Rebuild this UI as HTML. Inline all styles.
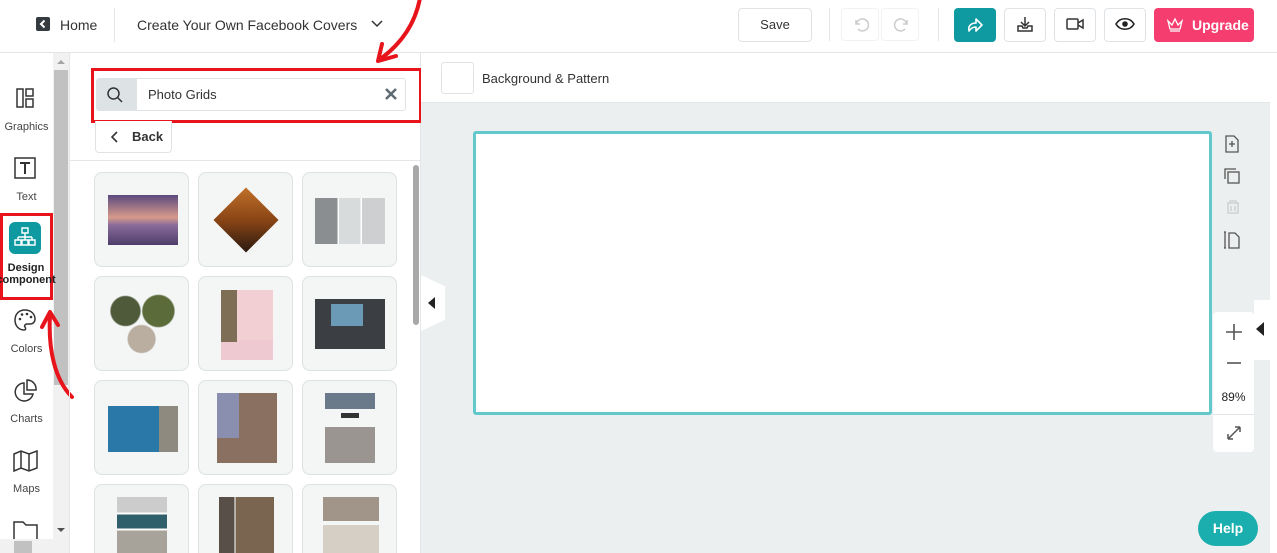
<!DOCTYPE html>
<html style="width:1277px;height:553px;overflow:hidden"><head><meta charset="utf-8"><style>
*{box-sizing:border-box;margin:0;padding:0}
body{width:1277px;height:553px;overflow:hidden;position:relative;background:#fff;font-family:"Liberation Sans",sans-serif;color:#333}
.a{position:absolute}
.btn{position:absolute;border:1px solid #dfe3e6;border-radius:4px;background:#fff}
.card{position:absolute;width:95px;height:95px;border:1px solid #dde1e3;border-radius:8px;background:#f4f6f6;overflow:hidden}
.side{position:absolute;left:0;width:53px;text-align:center;font-size:11px;color:#444}
</style></head><body>
<div class="a" style="left:0;top:52px;width:1277px;height:1px;background:#e3e6e8"></div>
<div class="a" style="left:36px;top:17px;width:14px;height:14px;background:#333b40;border-radius:2px"></div>
<svg class="a" style="left:36px;top:17px" width="14" height="14"><path d="M8.5 3.5 5 7l3.5 3.5" stroke="#fff" stroke-width="2" fill="none"/></svg>
<div class="a" style="left:60px;top:17px;font-size:14px;color:#333">Home</div>
<div class="a" style="left:114px;top:8px;width:1px;height:34px;background:#e3e6e8"></div>
<div class="a" style="left:137px;top:17px;font-size:14px;color:#333">Create Your Own Facebook Covers</div>
<svg class="a" style="left:371px;top:19px" width="12" height="10"><path d="M1 2l5 5 5-5" stroke="#333" stroke-width="1.5" fill="none"/></svg>
<div class="btn" style="left:738px;top:8px;width:74px;height:34px;font-size:13px;text-align:center;line-height:32px;color:#333">Save</div>
<div class="a" style="left:829px;top:8px;width:1px;height:33px;background:#e3e6e8"></div>
<div class="btn" style="left:841px;top:8px;width:38px;height:33px;border-color:#f0f2f3"></div>
<div class="btn" style="left:881px;top:8px;width:38px;height:33px;border-color:#f0f2f3"></div>
<svg class="a" style="left:852px;top:15px" width="18" height="18"><path d="M4 5v4h4M4.5 9A6 6 0 1 1 6 14" stroke="#ccc" stroke-width="1.5" fill="none"/></svg>
<svg class="a" style="left:893px;top:15px" width="18" height="18"><path d="M14 5v4h-4M13.5 9A6 6 0 1 0 12 14" stroke="#ccc" stroke-width="1.5" fill="none"/></svg>
<div class="a" style="left:938px;top:8px;width:1px;height:33px;background:#e3e6e8"></div>
<div class="a" style="left:954px;top:8px;width:42px;height:34px;background:#0e9aa0;border-radius:4px"></div>
<svg class="a" style="left:965px;top:15px" width="20" height="20"><path d="M4 16c-1-4 1-8 7-8V4l6 6-6 6v-4c-3 0-5 1-7 4z" stroke="#fff" stroke-width="1.6" fill="none" stroke-linejoin="round"/></svg>
<div class="btn" style="left:1004px;top:8px;width:42px;height:34px"></div>
<svg class="a" style="left:1016px;top:15px" width="18" height="18"><path d="M9 2v8M5 7l4 4 4-4M2 11v5h14v-5h-4l-1 2H7l-1-2z" stroke="#333" stroke-width="1.5" fill="none"/></svg>
<div class="btn" style="left:1054px;top:8px;width:42px;height:34px"></div>
<svg class="a" style="left:1066px;top:16px" width="20" height="16"><rect x="1" y="3" width="11" height="10" rx="1" stroke="#333" stroke-width="1.5" fill="none"/><path d="M12 7l5-3v8l-5-3" stroke="#333" stroke-width="1.5" fill="none"/></svg>
<div class="btn" style="left:1104px;top:8px;width:42px;height:34px"></div>
<svg class="a" style="left:1115px;top:17px" width="20" height="14"><path d="M1 7c4-7 14-7 18 0-4 7-14 7-18 0z" stroke="#222" stroke-width="1.6" fill="none"/><circle cx="10" cy="7" r="2.8" fill="#222"/></svg>
<div class="a" style="left:1154px;top:8px;width:100px;height:34px;background:#f53d6f;border-radius:4px;color:#fff;font-weight:bold;font-size:14px;line-height:34px;padding-left:38px">Upgrade</div>
<svg class="a" style="left:1166px;top:17px" width="18" height="15"><path d="M2 4l4 4 3-6 3 6 4-4-2 8H4zM4 14h10" stroke="#fff" stroke-width="1.3" fill="none"/></svg>
<svg class="a" style="left:360px;top:0" width="70" height="70"><path d="M60 -2C55 25 40 45 19 60" stroke="#e8141c" stroke-width="4" fill="none" stroke-linecap="round"/><path d="M22 44 18 61 36 56" stroke="#e8141c" stroke-width="4" fill="none" stroke-linecap="round" stroke-linejoin="round"/></svg>
<div class="a" style="left:53px;top:53px;width:16px;height:500px;background:#f1f1f1"></div>
<div class="a" style="left:54px;top:70px;width:14px;height:315px;background:#c1c1c1"></div>
<svg class="a" style="left:56px;top:58px" width="10" height="8"><path d="M1 6l4-4 4 4z" fill="#a3a3a3"/></svg>
<svg class="a" style="left:56px;top:526px" width="10" height="8"><path d="M1 2l4 4 4-4z" fill="#505050"/></svg>
<svg class="a" style="left:16px;top:88px" width="18" height="20"><rect x="1" y="1" width="6" height="18" stroke="#333" stroke-width="1.5" fill="none"/><rect x="10" y="1" width="7" height="7" stroke="#333" stroke-width="1.5" fill="none"/><rect x="10" y="11" width="7" height="8" stroke="#333" stroke-width="1.5" fill="none"/></svg>
<div class="side" style="top:121px">Graphics</div>
<svg class="a" style="left:13px;top:156px" width="24" height="24"><rect x="2" y="2" width="20" height="20" stroke="#333" stroke-width="1.5" fill="none"/><path d="M7 7h10M12 7v11" stroke="#333" stroke-width="2"/></svg>
<div class="side" style="top:191px">Text</div>
<div class="a" style="left:0;top:213px;width:53px;height:87px;border:3px solid #e8141c"></div>
<div class="a" style="left:9px;top:222px;width:32px;height:32px;background:#0e9aa0;border-radius:6px"></div>
<svg class="a" style="left:9px;top:222px" width="32" height="32"><path d="M13 6h6v5h-6zM16 11v4M9 15h14M9 15v3M16 15v3M23 15v3M6 18h6v5H6zM13 18h6v5h-6zM20 18h6v5h-6z" stroke="#fff" stroke-width="1.4" fill="none"/></svg>
<div class="side" style="top:262px;font-weight:bold;color:#222;line-height:12px;left:-4px;width:60px">Design<br>component</div>
<svg class="a" style="left:13px;top:308px" width="24" height="24"><path d="M12 2C6 2 2 6 2 12s4 10 9 10c2 0 2-2 1-3s0-3 2-3h3c3 0 5-2 5-5 0-5-4-9-10-9z" stroke="#333" stroke-width="1.5" fill="none"/><circle cx="7" cy="11" r="1.3" fill="#333"/><circle cx="9" cy="6.5" r="1.3" fill="#333"/><circle cx="14" cy="6" r="1.3" fill="#333"/><circle cx="18" cy="9" r="1.3" fill="#333"/></svg>
<div class="side" style="top:343px">Colors</div>
<svg class="a" style="left:14px;top:379px" width="24" height="24"><path d="M10 4a9 9 0 1 0 9 11h-9z" stroke="#333" stroke-width="1.5" fill="none"/><path d="M13 1v10h9A9 9 0 0 0 13 1z" stroke="#333" stroke-width="1.5" fill="none"/></svg>
<div class="side" style="top:413px">Charts</div>
<svg class="a" style="left:13px;top:450px" width="26" height="22"><path d="M1 4l7-3 8 3 8-3v17l-8 3-8-3-7 3zM8 1v17M16 4v17" stroke="#333" stroke-width="1.5" fill="none"/></svg>
<div class="side" style="top:483px">Maps</div>
<svg class="a" style="left:13px;top:519px" width="26" height="34"><path d="M1 3h9l3 3h11v28H1z" stroke="#333" stroke-width="1.5" fill="none"/></svg>
<div class="a" style="left:0;top:539px;width:53px;height:14px;background:#f1f1f1"></div>
<div class="a" style="left:14px;top:541px;width:18px;height:12px;background:#c1c1c1"></div>
<svg class="a" style="left:40px;top:305px" width="40" height="95"><path d="M32 92C15 75 8 45 10 10" stroke="#e8141c" stroke-width="4" fill="none" stroke-linecap="round"/><path d="M2 22 10 7 18 20" stroke="#e8141c" stroke-width="4" fill="none" stroke-linecap="round" stroke-linejoin="round"/></svg>
<div class="a" style="left:69px;top:53px;width:1px;height:500px;background:#e3e6e8"></div>
<div class="a" style="left:420px;top:53px;width:1px;height:500px;background:#e3e6e8"></div>
<div class="a" style="left:91px;top:68px;width:331px;height:55px;border:3px solid #e8141c"></div>
<div class="a" style="left:96px;top:78px;width:310px;height:33px;border:1px solid #dfe3e6;border-radius:3px;overflow:hidden"><div style="width:40px;height:100%;background:#dde2e5"></div></div>
<svg class="a" style="left:106px;top:86px" width="18" height="18"><circle cx="7.5" cy="7.5" r="5.5" stroke="#333" stroke-width="1.5" fill="none"/><path d="M11.5 11.5 16 16" stroke="#333" stroke-width="1.5"/></svg>
<div class="a" style="left:148px;top:87px;font-size:13px;color:#333">Photo Grids</div>
<svg class="a" style="left:384px;top:87px" width="14" height="14"><path d="M2 2l10 10M12 2 2 12" stroke="#5f6b73" stroke-width="2.5"/></svg>
<div class="btn" style="left:95px;top:121px;width:77px;height:32px;border-top:none;border-radius:0 0 4px 4px;font-size:13px;line-height:31px;padding-left:36px;font-weight:bold;color:#333">Back</div>
<svg class="a" style="left:111px;top:131px" width="8" height="12"><path d="M6 1 1 6l5 5" stroke="#333" stroke-width="1.6" fill="none"/></svg>
<div class="a" style="left:70px;top:160px;width:350px;height:1px;background:#e3e6e8"></div>
<div class="a" style="left:413px;top:165px;width:6px;height:160px;background:#a8a8a8;border-radius:3px"></div>
<div class="card" style="left:94px;top:172px"><div class="a" style="left:13px;top:22px;width:70px;height:50px;background:linear-gradient(#5a4a7e,#d79a8a 45%,#8a6c9a 60%,#4d3d6a)"></div></div>
<div class="card" style="left:198px;top:172px"><div class="a" style="width:46px;height:46px;transform:rotate(45deg);background:linear-gradient(135deg,#c0702a,#8a4515,#2a1a10);top:24px;left:24px"></div></div>
<div class="card" style="left:302px;top:172px"><div class="a" style="left:12px;top:25px;width:70px;height:46px;background:linear-gradient(90deg,#8b8e90 0 32%,#fff 32% 34%,#d8dbdc 34% 65%,#fff 65% 67%,#cdcfd0 67%)"></div></div>
<div class="card" style="left:94px;top:276px"><div class="a" style="left:13px;top:13px;width:70px;height:70px;background:radial-gradient(circle at 25% 30%,#4e5a3a 20%,transparent 22%),radial-gradient(circle at 72% 30%,#5b6b3a 22%,transparent 24%),radial-gradient(circle at 48% 70%,#b9aea0 22%,transparent 24%)"></div></div>
<div class="card" style="left:198px;top:276px"><div class="a" style="left:22px;top:13px;width:52px;height:70px;background:linear-gradient(#f1cfd3 0 72%,#eec9d2 72%)"></div><div class="a" style="left:22px;top:13px;width:16px;height:52px;background:#7d6e55"></div></div>
<div class="card" style="left:302px;top:276px"><div class="a" style="left:12px;top:22px;width:70px;height:50px;background:#3b3f44"></div><div class="a" style="left:28px;top:27px;width:32px;height:22px;background:#6a9ab5"></div></div>
<div class="card" style="left:94px;top:380px"><div class="a" style="left:13px;top:25px;width:70px;height:46px;background:linear-gradient(90deg,#2a78a8 0 73%,#8e8a80 73%)"></div></div>
<div class="card" style="left:198px;top:380px"><div class="a" style="left:18px;top:12px;width:60px;height:70px;background:#8a7060"></div><div class="a" style="left:18px;top:12px;width:22px;height:45px;background:#8a8fb0"></div></div>
<div class="card" style="left:302px;top:380px"><div class="a" style="left:22px;top:12px;width:50px;height:16px;background:#6a7a8a"></div><div class="a" style="left:22px;top:46px;width:50px;height:36px;background:#9a9590"></div><div class="a" style="left:38px;top:32px;width:18px;height:5px;background:#333"></div></div>
<div class="card" style="left:94px;top:484px"><div class="a" style="left:22px;top:12px;width:50px;height:70px;background:linear-gradient(#ccc 0 22%,#fff 22% 25%,#2f5f6a 25% 45%,#fff 45% 48%,#a8a39a 48%)"></div></div>
<div class="card" style="left:198px;top:484px"><div class="a" style="left:20px;top:12px;width:55px;height:70px;background:linear-gradient(90deg,#585048 0 28%,#fff 28% 30%,#7a6550 30%)"></div></div>
<div class="card" style="left:302px;top:484px"><div class="a" style="left:20px;top:12px;width:56px;height:24px;background:#a09588"></div><div class="a" style="left:20px;top:40px;width:56px;height:42px;background:#d6cfc6"></div></div>
<div class="a" style="left:421px;top:53px;width:849px;height:50px;background:#fff;border-bottom:1px solid #e3e6e8"></div>
<div class="a" style="left:441px;top:62px;width:33px;height:32px;border:1px solid #dfe3e6;border-radius:3px"></div>
<div class="a" style="left:482px;top:71px;font-size:13px;color:#333">Background &amp; Pattern</div>
<div class="a" style="left:421px;top:103px;width:849px;height:450px;background:#ecefef"></div>
<div class="a" style="left:1270px;top:53px;width:7px;height:500px;background:#fff"></div>
<div class="a" style="left:421px;top:275px;width:24px;height:56px;background:#fff;clip-path:polygon(0 0,100% 20%,100% 80%,0 100%)"></div>
<svg class="a" style="left:428px;top:297px" width="8" height="12"><path d="M7 0v12L0 6z" fill="#222"/></svg>
<div class="a" style="left:473px;top:131px;width:739px;height:284px;background:#fff;border:3px solid #62c8cc;border-radius:3px"></div>
<svg class="a" style="left:1222px;top:134px" width="20" height="120" stroke="#555" stroke-width="1.3" fill="none"><path d="M4 2h8l4 4v12H4zM7 10h6M10 7v6"/><rect x="6" y="38" width="11" height="11"/><path d="M3 45V35h11"/><path d="M5 69h12M8 69v-2h6v2M6 69v10h10V69M9 72v5M13 72v5" stroke="#ccc"/><path d="M3 98v16M2 98h2M2 114h2M7 99h6l4 4v11H7z"/></svg>
<div class="a" style="left:1213px;top:312px;width:41px;height:140px;background:#fff;border-radius:4px"></div>
<div class="a" style="left:1254px;top:300px;width:23px;height:60px;background:#fff"></div>
<svg class="a" style="left:1255px;top:322px" width="10" height="14"><path d="M9 0v14L1 7z" fill="#222"/></svg>
<svg class="a" style="left:1225px;top:323px" width="18" height="18"><path d="M9 1v16M1 9h16" stroke="#555" stroke-width="1.6"/></svg>
<svg class="a" style="left:1226px;top:358px" width="16" height="10"><path d="M1 5h14" stroke="#555" stroke-width="1.6"/></svg>
<div class="a" style="left:1213px;top:390px;width:41px;text-align:center;font-size:12px;color:#222">89%</div>
<div class="a" style="left:1213px;top:414px;width:41px;height:1px;background:#e3e6e8"></div>
<svg class="a" style="left:1226px;top:425px" width="16" height="16"><path d="M2 14 14 2M2 14v-5M2 14h5M14 2H9M14 2v5" stroke="#555" stroke-width="1.5" fill="none"/></svg>
<div class="a" style="left:1198px;top:511px;width:60px;height:35px;background:#1baeae;border-radius:18px;color:#fff;font-weight:bold;font-size:14px;text-align:center;line-height:35px">Help</div>
</body></html>
